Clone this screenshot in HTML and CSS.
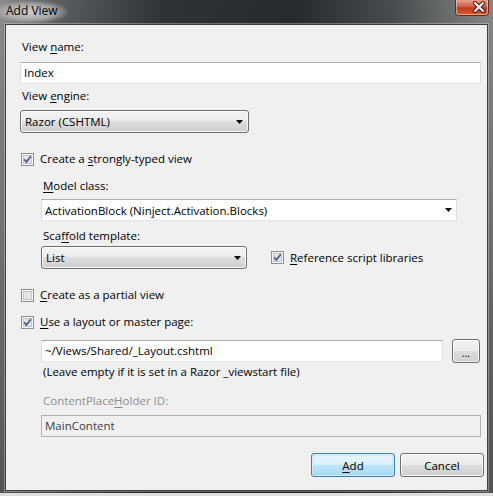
FILE: index.html
```html
<!DOCTYPE html>
<html>
<head>
<meta charset="utf-8">
<link rel="stylesheet" href="styles.css">
</head>
<body>
<div class="window">
  <div class="titlebar">
    <span class="title">Add View</span>
    <div class="close">
      <svg width="34" height="16" viewBox="0 0 34 16">
        <defs>
          <linearGradient id="cg" x1="0" y1="0" x2="0" y2="1">
            <stop offset="0" stop-color="#e7a08c"/>
            <stop offset="0.45" stop-color="#cf5a40"/>
            <stop offset="0.5" stop-color="#bd3a20"/>
            <stop offset="1" stop-color="#d4602c"/>
          </linearGradient>
        </defs>
        <path d="M0.5 0 V12.5 Q0.5 15.5 3.5 15.5 H30.5 Q33.5 15.5 33.5 12.5 V0" fill="url(#cg)" stroke="#5e2a20"/>
        <path d="M1.5 0 V12.5 Q1.5 14.5 3.5 14.5 H30.5 Q32.5 14.5 32.5 12.5 V0" fill="none" stroke="rgba(255,220,210,0.55)"/>
        <path d="M20 3 L28 11 M28 3 L20 11" stroke="#3b1b14" stroke-width="4" stroke-linecap="round"/>
        <path d="M20 3 L28 11 M28 3 L20 11" stroke="#ffffff" stroke-width="2" stroke-linecap="round"/>
      </svg>
    </div>
  </div>
  <div class="client">
    <div class="lbl l-name">View <u>n</u>ame:</div>
    <div class="textbox tb-name">Index</div>
    <div class="lbl l-engine">View <u>e</u>ngine:</div>
    <div class="combo cb-engine"><span>Razor (CSHTML)</span><svg class="arrow" width="7" height="4" viewBox="0 0 7 4"><path d="M0 0H7L3.5 4z" fill="#000"/></svg></div>

    <div class="check row-strong">
      <svg class="cb" width="13" height="13" viewBox="0 0 13 13"><rect x="0.5" y="0.5" width="12" height="12" fill="#f6f6f6" stroke="#8e8f8f"/><rect x="2.5" y="2.5" width="8" height="8" fill="#e4e6ea" stroke="#c3c7cd"/><path d="M3.2 6.2 L5.4 9 L9.8 3.2" fill="none" stroke="#4a5e90" stroke-width="1.8"/></svg>
      <span>Create a <u>s</u>trongly-typed view</span>
    </div>

    <div class="indent">
      <div class="lbl l-model"><u>M</u>odel class:</div>
      <div class="editcombo"><span>ActivationBlock (Ninject.Activation.Blocks)</span><svg class="arrow" width="7" height="4" viewBox="0 0 7 4"><path d="M0 0H7L3.5 4z" fill="#000"/></svg></div>
      <div class="lbl l-scaffold">Sca<u>f</u>fold template:</div>
      <div class="scaffold-row">
        <div class="combo cb-list"><span>List</span><svg class="arrow" width="7" height="4" viewBox="0 0 7 4"><path d="M0 0H7L3.5 4z" fill="#000"/></svg></div>
        <div class="check ref-check">
          <svg class="cb" width="13" height="13" viewBox="0 0 13 13"><rect x="0.5" y="0.5" width="12" height="12" fill="#f6f6f6" stroke="#8e8f8f"/><rect x="2.5" y="2.5" width="8" height="8" fill="#e4e6ea" stroke="#c3c7cd"/><path d="M3.2 6.2 L5.4 9 L9.8 3.2" fill="none" stroke="#4a5e90" stroke-width="1.8"/></svg>
          <span><u>R</u>eference script libraries</span>
        </div>
      </div>
    </div>

    <div class="check row-partial">
      <svg class="cb" width="13" height="13" viewBox="0 0 13 13"><rect x="0.5" y="0.5" width="12" height="12" fill="#f6f6f6" stroke="#8e8f8f"/><rect x="2.5" y="2.5" width="8" height="8" fill="#e4e6ea" stroke="#c3c7cd"/></svg>
      <span><u>C</u>reate as a partial view</span>
    </div>

    <div class="check row-layout">
      <svg class="cb" width="13" height="13" viewBox="0 0 13 13"><rect x="0.5" y="0.5" width="12" height="12" fill="#f6f6f6" stroke="#8e8f8f"/><rect x="2.5" y="2.5" width="8" height="8" fill="#e4e6ea" stroke="#c3c7cd"/><path d="M3.2 6.2 L5.4 9 L9.8 3.2" fill="none" stroke="#4a5e90" stroke-width="1.8"/></svg>
      <span><u>U</u>se a layout or master page:</span>
    </div>

    <div class="indent">
      <div class="layout-row">
        <div class="textbox tb-layout">~/Views/Shared/_Layout.cshtml</div>
        <div class="btn btn-browse">...</div>
      </div>
      <div class="lbl l-hint">(Leave empty if it is set in a Razor _viewstart file)</div>
      <div class="lbl l-cph disabled">ContentPlace<u>H</u>older ID:</div>
      <div class="textbox tb-cph disabled">MainContent</div>
    </div>

    <div class="buttons">
      <div class="btn btn-default"><span><u>A</u>dd</span></div>
      <div class="btn"><span>Cancel</span></div>
    </div>
  </div>
</div>
</body>
</html>
```
FILE: styles.css
```css
* { box-sizing: border-box; }
html, body { margin: 0; padding: 0; }
body {
  width: 493px;
  height: 496px;
  overflow: hidden;
  background: linear-gradient(to bottom, #b9b9b9, #dedede);
  font-family: "Open Sans", "Noto Sans", sans-serif;
  font-size: 11.5px;
  color: #000;
}
u { text-decoration: underline; text-underline-offset: 2px; text-decoration-thickness: 1px; }

.window {
  width: 493px;
  height: 493px;
  display: flex;
  flex-direction: column;
  background:
    linear-gradient(to bottom, rgba(0,0,0,0) 0%, rgba(18,20,22,0.45) 100%),
    linear-gradient(to right, #8b8b8b 0%, #5b5e60 12%, #303335 33%, #282b2d 60%, #4a4d4f 80%, #858788 100%);
}

.titlebar {
  height: 24px;
  flex: none;
  display: flex;
  justify-content: space-between;
  align-items: flex-start;
}
.title {
  margin-top: 1px;
  padding: 2px 10px 4px 6px;
  line-height: 16px;
  font-size: 12px;
  color: #000;
  background: radial-gradient(ellipse at 45% 50%, rgba(210,210,210,0.95) 0%, rgba(190,190,190,0.75) 45%, rgba(160,160,160,0) 75%);
}
.close { margin-right: 4px; }
.close svg { display: block; }

.client {
  margin: 0 5px;
  height: 467px;
  background: #f0f0f0;
  border: 1px solid #3e4143;
  box-shadow: 0 0 0 1px rgba(255,255,255,0.3);
  padding: 0 3px 0 14px;
  display: flex;
  flex-direction: column;
  align-items: flex-start;
}

.lbl {
  height: 16px;
  line-height: 16px;
  padding-left: 2px;
  white-space: nowrap;
}
.disabled { color: #8d8d8d; }

.textbox {
  height: 22px;
  line-height: 20px;
  background: #fff;
  border: 1px solid;
  border-color: #abadb3 #dbdee4 #e3e9ef #dbdee4;
  padding: 0 3px;
  white-space: nowrap;
}
.textbox.disabled {
  background: #f0f0f0;
  border-color: #adb2b5;
  color: #3c3c3c;
}

.combo {
  height: 23px;
  border: 1px solid #707070;
  border-radius: 3px;
  background: linear-gradient(to bottom, #f3f3f3 0%, #ececec 50%, #dedede 50%, #d0d0d0 100%);
  box-shadow: inset 0 0 0 1px rgba(255,255,255,0.75);
  display: flex;
  align-items: center;
  justify-content: space-between;
  padding: 0 5px 0 4px;
}
.editcombo {
  height: 22px;
  background: #fff;
  border: 1px solid;
  border-color: #abadb3 #dbdee4 #e3e9ef #dbdee4;
  display: flex;
  align-items: center;
  justify-content: space-between;
  padding: 0 4px 0 3px;
  width: 416px;
}
.arrow { display: block; flex: none; }

.check {
  display: flex;
  align-items: center;
  gap: 6px;
  height: 16px;
  line-height: 16px;
  margin-left: 1px;
  white-space: nowrap;
}
.cb { display: block; flex: none; }

.indent {
  padding-left: 21px;
  display: flex;
  flex-direction: column;
  align-items: flex-start;
}

.l-name { margin-top: 14px; }
.tb-name { margin-top: 7px; width: 461px; }
.l-engine { margin-top: 4px; }
.cb-engine { margin-top: 6px; width: 229px; }
.row-strong { margin-top: 18px; }
.l-model { margin-top: 11px; }
.editcombo { margin-top: 5px; }
.l-scaffold { margin-top: 7px; }
.scaffold-row {
  margin-top: 2px;
  display: flex;
  align-items: center;
  gap: 24px;
}
.cb-list { width: 206px; }
.ref-check { margin-left: 0; }
.row-partial { margin-top: 18px; }
.row-layout { margin-top: 11px; }
.layout-row {
  margin-top: 9px;
  display: flex;
  align-items: center;
  gap: 9px;
}
.tb-layout { width: 402px; }
.l-hint { margin-top: 1px; }
.l-cph { margin-top: 13px; }
.tb-cph { margin-top: 6px; width: 440px; }

.btn {
  height: 24px;
  width: 84px;
  border: 1px solid #707070;
  border-radius: 3px;
  background: linear-gradient(to bottom, #f2f2f2 0%, #ebebeb 50%, #dddddd 50%, #cfcfcf 100%);
  box-shadow: inset 0 0 0 1px rgba(255,255,255,0.7);
  display: flex;
  align-items: center;
  justify-content: center;
  white-space: nowrap;
}
.btn-browse {
  width: 28px;
  line-height: 16px;
  padding-top: 3px;
  font-size: 10px;
}
.btn-default {
  border-color: #3c7fb1;
  background: linear-gradient(to bottom, #eaf6fd 0%, #d9f0fc 50%, #bee6fd 50%, #a7d9f5 100%);
  box-shadow: inset 0 0 0 1px rgba(255,255,255,0.6), inset 0 0 2px 1px #8fd0f2;
}
.buttons {
  align-self: stretch;
  margin-top: 16px;
  display: flex;
  justify-content: flex-end;
  gap: 5px;
}
```
